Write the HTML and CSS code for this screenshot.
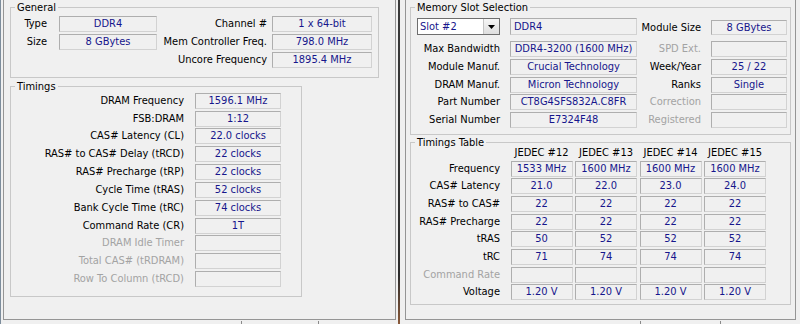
FILE: index.html
```html
<!DOCTYPE html>
<html lang="en">
<head>
  <meta charset="UTF-8" />
  <title>CPU-Z Memory / SPD</title>
  <link rel="stylesheet" href="styles.css">
</head>
<body>
  <div class="window window-left">
    <div class="tab-page">
      <fieldset class="group general">
        <legend>General</legend>
        <div class="general-grid">
          <span class="lbl">Type</span>
          <span class="val">DDR4</span>
          <span class="lbl">Channel #</span>
          <span class="val">1 x 64-bit</span>

          <span class="lbl">Size</span>
          <span class="val">8 GBytes</span>
          <span class="lbl">Mem Controller Freq.</span>
          <span class="val">798.0 MHz</span>

          <span></span>
          <span></span>
          <span class="lbl">Uncore Frequency</span>
          <span class="val">1895.4 MHz</span>
        </div>
      </fieldset>

      <fieldset class="group timings">
        <legend>Timings</legend>
        <div class="timings-grid">
          <span class="lbl">DRAM Frequency</span><span class="val">1596.1 MHz</span>
          <span class="lbl">FSB:DRAM</span><span class="val">1:12</span>
          <span class="lbl">CAS# Latency (CL)</span><span class="val">22.0 clocks</span>
          <span class="lbl">RAS# to CAS# Delay (tRCD)</span><span class="val">22 clocks</span>
          <span class="lbl">RAS# Precharge (tRP)</span><span class="val">22 clocks</span>
          <span class="lbl">Cycle Time (tRAS)</span><span class="val">52 clocks</span>
          <span class="lbl">Bank Cycle Time (tRC)</span><span class="val">74 clocks</span>
          <span class="lbl">Command Rate (CR)</span><span class="val">1T</span>
          <span class="lbl off">DRAM Idle Timer</span><span class="val"></span>
          <span class="lbl off">Total CAS# (tRDRAM)</span><span class="val"></span>
          <span class="lbl off">Row To Column (tRCD)</span><span class="val"></span>
        </div>
      </fieldset>
    </div>
    <div class="footer footer-left"><span class="tick"></span></div>
  </div>

  <div class="divider"></div>

  <div class="window window-right">
    <div class="tab-page">
      <fieldset class="group slot">
        <legend>Memory Slot Selection</legend>
        <div class="slot-grid">
          <div class="slot-select">
            <span class="slot-text">Slot #2</span>
            <span class="slot-arrow">
              <svg width="7" height="4" viewBox="0 0 7 4"><path d="M0 0H7L3.5 4Z" fill="#000"/></svg>
            </span>
          </div>
          <span class="val left">DDR4</span>
          <span class="lbl low">Module Size</span>
          <span class="val low">8 GBytes</span>

          <span class="lbl">Max Bandwidth</span>
          <span class="val">DDR4-3200 (1600 MHz)</span>
          <span class="lbl off">SPD Ext.</span>
          <span class="val"></span>

          <span class="lbl">Module Manuf.</span>
          <span class="val">Crucial Technology</span>
          <span class="lbl">Week/Year</span>
          <span class="val">25 / 22</span>

          <span class="lbl">DRAM Manuf.</span>
          <span class="val">Micron Technology</span>
          <span class="lbl">Ranks</span>
          <span class="val">Single</span>

          <span class="lbl">Part Number</span>
          <span class="val">CT8G4SFS832A.C8FR</span>
          <span class="lbl off">Correction</span>
          <span class="val"></span>

          <span class="lbl">Serial Number</span>
          <span class="val">E7324F48</span>
          <span class="lbl off">Registered</span>
          <span class="val"></span>
        </div>
      </fieldset>

      <fieldset class="group table">
        <legend>Timings Table</legend>
        <div class="table-grid">
          <span></span>
          <span class="head">JEDEC #12</span>
          <span class="head">JEDEC #13</span>
          <span class="head">JEDEC #14</span>
          <span class="head">JEDEC #15</span>

          <span class="lbl">Frequency</span>
          <span class="val">1533 MHz</span><span class="val">1600 MHz</span><span class="val">1600 MHz</span><span class="val">1600 MHz</span>

          <span class="lbl">CAS# Latency</span>
          <span class="val">21.0</span><span class="val">22.0</span><span class="val">23.0</span><span class="val">24.0</span>

          <span class="lbl">RAS# to CAS#</span>
          <span class="val">22</span><span class="val">22</span><span class="val">22</span><span class="val">22</span>

          <span class="lbl">RAS# Precharge</span>
          <span class="val">22</span><span class="val">22</span><span class="val">22</span><span class="val">22</span>

          <span class="lbl">tRAS</span>
          <span class="val">50</span><span class="val">52</span><span class="val">52</span><span class="val">52</span>

          <span class="lbl">tRC</span>
          <span class="val">71</span><span class="val">74</span><span class="val">74</span><span class="val">74</span>

          <span class="lbl off">Command Rate</span>
          <span class="val"></span><span class="val"></span><span class="val"></span><span class="val"></span>

          <span class="lbl">Voltage</span>
          <span class="val">1.20 V</span><span class="val">1.20 V</span><span class="val">1.20 V</span><span class="val">1.20 V</span>
        </div>
      </fieldset>
    </div>
    <div class="footer footer-right"><span class="tick"></span></div>
  </div>
</body>
</html>
```

FILE: styles.css
```css
*,
*::before,
*::after {
  box-sizing: border-box;
}

html, body {
  margin: 0;
  padding: 0;
}

body {
  width: 800px;
  height: 324px;
  overflow: hidden;
  display: flex;
  background: #f0f0f0;
  color: #000;
  font-family: "DejaVu Sans Condensed", "Liberation Sans", sans-serif;
  font-size: 11px;
}

/* the two cpu-z windows side by side */
.window {
  height: 324px;
  display: flex;
  flex-direction: column;
}

.window-left {
  width: 398px;
  border-left: 1px solid #7d8d9c;
  padding-left: 2px;
}

.window-right {
  width: 400px;
  padding-left: 5px;
}

.divider {
  width: 2px;
  background: linear-gradient(#3a3a3a, #2c2c2c 85%, #8a5a3a);
}

.tab-page {
  margin-top: -2px;
  height: 322px;
  border: 1px solid #959595;
}

.window-left .tab-page {
  width: 393px;
}

.window-right .tab-page {
  width: 391px;
}

.footer {
  display: flex;
  margin-top: 1px;
  height: 3px;
}

.tick {
  height: 3px;
  border-left: 1px solid #8a8a8a;
  border-right: 1px solid #8a8a8a;
}

.footer-left .tick {
  margin-left: 238px;
  width: 78px;
}

.footer-right .tick {
  margin-left: 235px;
  width: 81px;
}

/* group boxes */
.group {
  margin: 0;
  border: 1px solid #c8c8c8;
  min-width: 0;
}

.group legend {
  margin-left: 4px;
  padding: 0 2px;
  height: 13px;
  line-height: 13px;
}

.general {
  margin: 2px 0 0 6px;
  width: 369px;
  padding: 2px 6px 9px 0;
}

.timings {
  margin: 2px 0 0 6px;
  width: 292px;
  padding: 0 0 9px 0;
}

.slot {
  margin: 2px 0 0 4px;
  width: 381px;
  padding: 4px 2px 6px 0;
}

.table {
  margin: 1px 0 0 4px;
  width: 381px;
  padding: 0 0 4px 0;
}

/* fields */
.lbl {
  text-align: right;
  line-height: 16px;
  white-space: nowrap;
}

.off {
  color: #a3a3a3;
}

.val {
  height: 16px;
  line-height: 14px;
  border: 1px solid;
  border-color: #aeaeae #d2d2d2 #d2d2d2 #aeaeae;
  color: #16168c;
  text-align: center;
  white-space: nowrap;
  overflow: hidden;
}

.val.left {
  text-align: left;
  padding-left: 3px;
}

.general-grid {
  display: grid;
  grid-template-columns: 48px 98px 1fr 100px;
  grid-auto-rows: 16px;
  row-gap: 1.85px;
}

.general-grid .lbl:nth-child(4n+1) {
  padding-right: 12px;
}

.general-grid .lbl:nth-child(4n+3) {
  padding-right: 5px;
}

.timings-grid {
  display: grid;
  grid-template-columns: 184px 86px;
  grid-auto-rows: 16px;
  row-gap: 1.85px;
}

.timings-grid .lbl {
  padding-right: 11px;
}

.slot-grid {
  display: grid;
  grid-template-columns: 99px 127px 74px 76px;
  grid-template-rows: 21.5px repeat(5, 16px);
  row-gap: 1.7px;
}

.slot-grid .lbl {
  padding-right: 10px;
}

.slot-grid .low {
  margin-top: 2px;
}

.slot-grid .val.low {
  height: 15px;
  line-height: 13px;
}

.slot-grid > .val:first-of-type,
.slot-grid .val.left {
  height: 17px;
  line-height: 15px;
}

.slot-select {
  display: flex;
  height: 17px;
  width: 83px;
  margin-left: 6px;
  border: 1px solid #6e6e6e;
  background: #fff;
}

.slot-text {
  flex: 1;
  padding-left: 2px;
  line-height: 15px;
  color: #16168c;
}

.slot-arrow {
  width: 16px;
  display: flex;
  align-items: center;
  justify-content: center;
  border-left: 1px solid #c4c4c4;
  background: linear-gradient(#f6f6f6, #dedede);
}

.table-grid {
  display: grid;
  grid-template-columns: 97px repeat(4, 62px);
  grid-template-rows: 13px;
  grid-auto-rows: 16px;
  column-gap: 2.5px;
  row-gap: 1.7px;
  margin-top: -3px;
}

.table-grid .lbl {
  padding-right: 8px;
}

.head {
  text-align: center;
  line-height: 13px;
  white-space: nowrap;
}
```
